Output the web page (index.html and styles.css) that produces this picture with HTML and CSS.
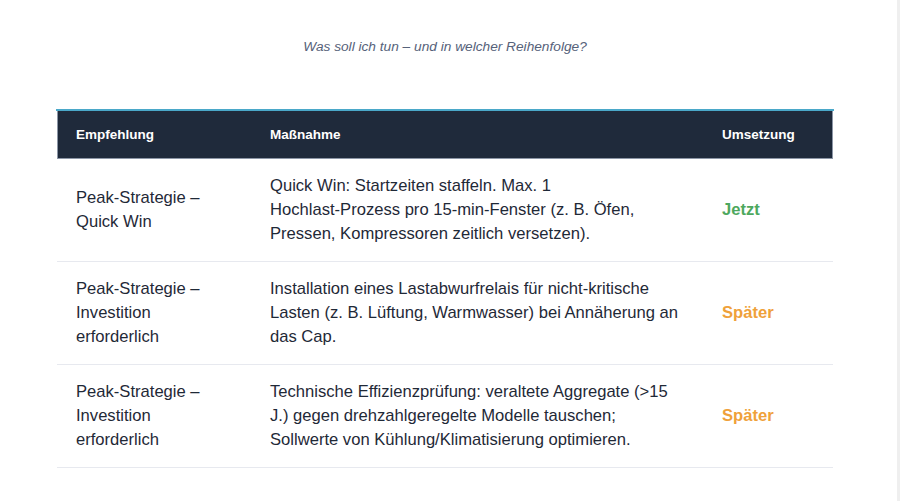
FILE: index.html
```html
<!DOCTYPE html>
<html lang="de">
<head>
<meta charset="utf-8">
<title>Empfehlungen</title>
<link rel="stylesheet" href="styles.css">
</head>
<body>
<div class="page">
  <main class="main">
    <p class="subtitle">Was soll ich tun – und in welcher Reihenfolge?</p>
    <div class="table-wrap">
      <table class="plan">
        <colgroup>
          <col class="c1">
          <col class="c2">
          <col class="c3">
        </colgroup>
        <thead>
          <tr>
            <th>Empfehlung</th>
            <th>Maßnahme</th>
            <th>Umsetzung</th>
          </tr>
        </thead>
        <tbody>
          <tr>
            <td>Peak-Strategie – Quick Win</td>
            <td>Quick Win: Startzeiten staffeln. Max. 1 <span class="nobr">Hochlast-Prozess</span> pro <span class="nobr">15-min-Fenster</span> (z. B. Öfen, Pressen, Kompressoren zeitlich versetzen).</td>
            <td class="status now">Jetzt</td>
          </tr>
          <tr>
            <td>Peak-Strategie – Investition erforderlich</td>
            <td>Installation eines Lastabwurfrelais für <span class="nobr">nicht-kritische</span> Lasten (z. B. Lüftung, Warmwasser) bei Annäherung an das Cap.</td>
            <td class="status later">Später</td>
          </tr>
          <tr>
            <td>Peak-Strategie – Investition erforderlich</td>
            <td>Technische Effizienzprüfung: veraltete Aggregate (&gt;15 J.) gegen drehzahlgeregelte Modelle tauschen; Sollwerte von Kühlung/Klimatisierung optimieren.</td>
            <td class="status later">Später</td>
          </tr>
        </tbody>
      </table>
    </div>
  </main>
  <div class="scroll-track"></div>
</div>
</body>
</html>
```

FILE: styles.css
```css
* { box-sizing: border-box; }

html, body {
  margin: 0;
  padding: 0;
  background: #ffffff;
}

body {
  font-family: "Liberation Sans", Arial, Helvetica, sans-serif;
  color: #1f2937;
}

.page {
  display: flex;
  min-height: 501px;
}

.main {
  flex: 1;
  padding: 38px 0 0 56px;
}

.scroll-track {
  width: 3px;
  background: #efefef;
}

.subtitle {
  width: 778px;
  margin: 0 0 53px 0;
  text-align: center;
  font-style: italic;
  font-size: 13.7px;
  line-height: 18px;
  color: #56627a;
}

.table-wrap {
  width: 778px;
  border-top: 2px solid #4aa8c9;
}

.plan {
  width: 776px;
  margin: 0 1px;
  border-collapse: separate;
  border-spacing: 0;
  table-layout: fixed;
}

.c1 { width: 194px; }
.c2 { width: 452px; }
.c3 { width: 130px; }

.plan th {
  background: #1f2a3b;
  color: #ffffff;
  text-align: left;
  font-weight: bold;
  font-size: 13.5px;
  line-height: 15px;
  padding: 16px 16px 16px 19px;
  border-bottom: 1px solid #8c96a6;
}

.plan th:first-child {
  border-left: 1px solid #8c96a6;
  padding-left: 18px;
}

.plan th:last-child {
  border-right: 1px solid #8c96a6;
}

.plan td {
  font-size: 16.6px;
  line-height: 24px;
  padding: 15px 19px 15px 19px;
  vertical-align: middle;
  border-bottom: 1px solid #e7e9ef;
  color: #1f2937;
}

.nobr {
  white-space: nowrap;
}

.plan td.status {
  font-weight: bold;
}

.plan td.now { color: #4ea85e; }
.plan td.later { color: #efa13a; }
```
